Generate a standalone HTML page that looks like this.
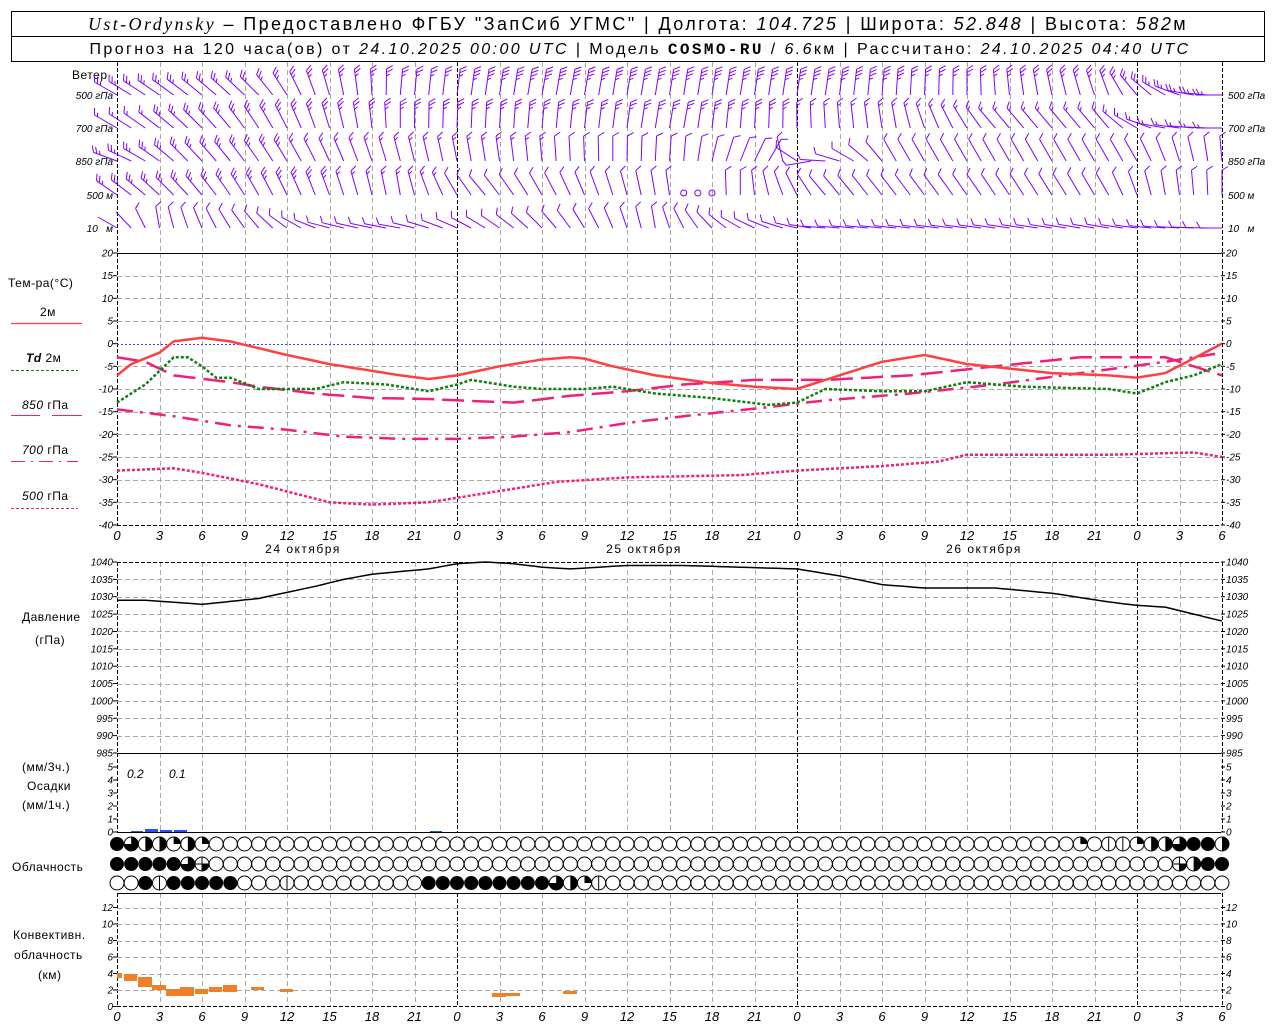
<!DOCTYPE html>
<html><head><meta charset="utf-8"><style>
html,body{margin:0;padding:0;background:#fff;}
svg{display:block;}
text{font-family:"Liberation Sans",sans-serif;}
.t{font-size:12px;fill:#000;letter-spacing:0.5px;}
.ax{font-size:10px;font-style:italic;fill:#000;}
</style></head><body>
<svg id="s" width="1280" height="1024" viewBox="0 0 1280 1024" xmlns="http://www.w3.org/2000/svg">
<rect width="1280" height="1024" fill="#fff"/>
<rect x="11.5" y="11.5" width="1253" height="50" fill="none" stroke="#000"/>
<line x1="11" y1="36.5" x2="1265" y2="36.5" stroke="#000"/>
<text x="638" y="30" text-anchor="middle" style="font-size:18px;letter-spacing:2.4px"><tspan font-style="italic" font-family="Liberation Serif">Ust-Ordynsky</tspan> – Предоставлено ФГБУ "ЗапСиб УГМС" | Долгота: <tspan font-style="italic">104.725</tspan> | Широта: <tspan font-style="italic">52.848</tspan> | Высота: <tspan font-style="italic">582</tspan>м</text>
<text x="640" y="54" text-anchor="middle" style="font-size:16px;letter-spacing:2.4px">Прогноз на 120 часа(ов) от <tspan font-style="italic">24.10.2025 00:00 UTC</tspan> | Модель <tspan font-weight="bold" font-family="Liberation Mono">COSMO-RU</tspan> / <tspan font-style="italic">6.6</tspan>км | Рассчитано: <tspan font-style="italic">24.10.2025 04:40 UTC</tspan></text>

<text class="t" x="72" y="79">Ветер</text>
<g class="ax" text-anchor="end">
<text x="113" y="99">500 гПа</text><text x="113" y="132">700 гПа</text><text x="113" y="165">850 гПа</text><text x="113" y="199">500 м</text><text x="113" y="232">10&#160;&#160;&#160;м</text>
</g>
<g class="ax">
<text x="1228" y="99">500 гПа</text><text x="1228" y="132">700 гПа</text><text x="1228" y="165">850 гПа</text><text x="1228" y="199">500 м</text><text x="1228" y="232">10&#160;&#160;&#160;м</text>
</g>

<text class="t" x="8" y="287">Тем-ра(°C)</text>
<text class="t" x="40" y="316">2м</text>
<line x1="11" y1="323.5" x2="82" y2="323.5" stroke="#ff4040" stroke-width="1.2"/>
<text class="t" x="26" y="362"><tspan font-style="italic" font-weight="bold">Td</tspan>  2м</text>
<line x1="11" y1="370.5" x2="78" y2="370.5" stroke="#108010" stroke-dasharray="3,2"/>
<text class="t" x="22" y="409"><tspan font-style="italic">850</tspan> гПа</text>
<line x1="11" y1="415.5" x2="40" y2="415.5" stroke="#f0207a"/><line x1="52" y1="415.5" x2="82" y2="415.5" stroke="#f0207a"/>
<text class="t" x="22" y="454"><tspan font-style="italic">700</tspan> гПа</text>
<line x1="11" y1="461.5" x2="78" y2="461.5" stroke="#f0207a" stroke-dasharray="14,6,2,6"/>
<text class="t" x="22" y="500"><tspan font-style="italic">500</tspan> гПа</text>
<line x1="11" y1="508.5" x2="78" y2="508.5" stroke="#f0207a" stroke-dasharray="3,2"/>

<text class="t" x="22" y="621">Давление</text>
<text class="t" x="35" y="644">(гПа)</text>
<text class="t" x="22" y="771">(мм/3ч.)</text>
<text class="t" x="27" y="790">Осадки</text>
<text class="t" x="22" y="809">(мм/1ч.)</text>
<text class="t" x="12" y="871">Облачность</text>
<text class="t" x="13" y="939">Конвективн.</text>
<text class="t" x="14" y="959">облачность</text>
<text class="t" x="38" y="979">(км)</text>
<text class="ax" x="127" y="778" style="font-size:12px">0.2</text>
<text class="ax" x="169" y="778" style="font-size:12px">0.1</text>

<g class="t" text-anchor="middle" style="letter-spacing:1.5px">
<text x="303" y="553">24 октября</text><text x="644" y="553">25 октября</text><text x="984" y="553">26 октября</text>
</g>
<g id="dyn"></g>
</svg>
<script>
(function(){
var g=document.getElementById("dyn"),out=[];
function X(h){return 117+h*340/24;}
function add(s){out.push(s);}
function ln(x1,y1,x2,y2,st){add('<line x1="'+x1.toFixed(1)+'" y1="'+y1.toFixed(1)+'" x2="'+x2.toFixed(1)+'" y2="'+y2.toFixed(1)+'" '+st+'/>');}
var grey='stroke="#a8a8a8" stroke-dasharray="5,3"',blk='stroke="#000" stroke-dasharray="4,2"';
var panels=[[62,253],[253,525],[562,753],[753,832],[893,1006]];
panels.forEach(function(p){
 for(var h=0;h<=78;h+=3){var x=Math.round(X(h))+0.5;var day=(h%24==0)||h==78;ln(x,p[0],x,p[1],day?blk:grey);}
});
function TY(t){return 253+(20-t)*272/60;}
function PY(p){return 562+(1040-p)*191/55;}
function RY(r){return 832-r*13;}
function CY(k){return 1006.5-k*8.25;}
for(var t=15;t>=-35;t-=5){if(t==0)continue;var y=Math.round(TY(t))+0.5;ln(117,y,1221,y,grey);}
ln(117,344.5,1221,344.5,'stroke="#3040ff" stroke-dasharray="2,2"');
ln(117,525.5,1221,525.5,blk);
for(var p=1035;p>985;p-=5){var y=Math.round(PY(p))+0.5;ln(117,y,1221,y,grey);}
ln(117,562.5,1221,562.5,blk);
for(var k=2;k<=12;k+=2){var y=Math.round(CY(k))+0.5;ln(117,y,1221,y,grey);}
ln(117,1006.5,1221,1006.5,blk);
[253.5,753.5,832.5,893.5].forEach(function(y){ln(117,y,1221,y,'stroke="#000" stroke-width="1"');});
function axl(v,y,lab){add('<text class="ax" x="113" y="'+(y+3.5)+'" text-anchor="end">'+lab+'</text>');add('<text class="ax" x="1226" y="'+(y+3.5)+'">'+lab+'</text>');ln(113,y,117,y,'stroke="#000"');ln(1221,y,1225,y,'stroke="#000"');}
for(var t=20;t>=-40;t-=5)axl(t,TY(t),t);
for(var p=1040;p>=985;p-=5)axl(p,PY(p),p);
for(var r=0;r<=5;r++)axl(r,RY(r),r);
for(var k=0;k<=12;k+=2)axl(k,CY(k),k);
for(var h=0;h<=78;h+=3){var lab=h%24;add('<text class="ax" x="'+X(h).toFixed(1)+'" y="540" text-anchor="middle" style="font-size:13px">'+lab+'</text>');add('<text class="ax" x="'+X(h).toFixed(1)+'" y="1021" text-anchor="middle" style="font-size:13px">'+lab+'</text>');}
function interp(kf,h){for(var i=0;i<kf.length-1;i++){if(h<=kf[i+1][0]){var a=kf[i],b=kf[i+1],f=(h-a[0])/(b[0]-a[0]);return a[1]+(b[1]-a[1])*f;}}return kf[kf.length-1][1];}
function curve(kf,fy,st){var pts=[];for(var h=0;h<=78;h+=0.5){pts.push(X(h).toFixed(1)+','+fy(interp(kf,h)).toFixed(1));}add('<polyline fill="none" points="'+pts.join(' ')+'" '+st+'/>');}
var T2=[[0,-7],[1,-4.5],[3,-2],[4,0.5],[6,1.3],[8,0.5],[10,-1],[12,-2.5],[15,-4.5],[18,-6],[20,-7],[22,-7.8],[24,-7],[27,-5],[30,-3.5],[32,-3],[33,-3.3],[35,-5],[38,-7],[42,-8.7],[45,-9.5],[48,-10],[51,-7],[54,-4],[57,-2.5],[60,-4.5],[63,-5.5],[66,-6.5],[70,-7],[72,-7.5],[74,-6.5],[78,0]];
var TD=[[0,-13],[2,-9],[4,-3],[5,-3],[6,-5],[7,-7.5],[8,-7.5],[10,-10],[14,-10],[16,-8.5],[19,-9],[22,-10.5],[24,-9],[25,-8],[28,-9.5],[30,-10],[33,-10],[35,-9.5],[38,-11],[42,-12],[46,-13.5],[48,-13],[50,-10],[54,-10.5],[57,-10.5],[60,-8.5],[64,-9.5],[70,-10],[72,-11],[74,-8.5],[76,-7],[78,-4.5]];
var T85=[[0,-3],[2,-4],[4,-7],[8,-8.5],[10,-9.5],[14,-11],[18,-12],[22,-12.2],[24,-12.5],[28,-13],[32,-11.5],[36,-10.5],[40,-9],[45,-8],[50,-8],[56,-7],[62,-5],[68,-3],[74,-3],[78,-7]];
var T70=[[0,-14.5],[4,-16],[8,-18],[12,-19],[16,-20.5],[20,-21],[24,-21],[28,-20.5],[32,-19.5],[36,-17.5],[40,-16],[46,-14],[50,-12.5],[56,-11],[62,-9],[68,-6.5],[74,-4],[78,-2]];
var T50=[[0,-28],[4,-27.5],[6,-28.5],[10,-31],[15,-35],[18,-35.5],[22,-35],[24,-34],[28,-32],[31,-30.5],[36,-29.5],[44,-29],[48,-28],[54,-27],[58,-26],[60,-24.5],[70,-24.5],[76,-24],[78,-25]];
curve(T50,TY,'stroke="#f0207a" stroke-width="2.5" stroke-dasharray="3,2"');
curve(T70,TY,'stroke="#f0207a" stroke-width="2.5" stroke-dasharray="16,7,3,7"');
curve(T85,TY,'stroke="#f0207a" stroke-width="2.5" stroke-dasharray="22,8"');
curve(TD,TY,'stroke="#108010" stroke-width="2.5" stroke-dasharray="3,2"');
curve(T2,TY,'stroke="#ff4040" stroke-width="2.5"');
var PR=[[0,1029],[2,1029],[6,1027.8],[10,1029.5],[14,1033],[16,1035],[18,1036.5],[22,1038],[24,1039.5],[26,1040],[28,1039.5],[30,1038.5],[32,1038],[36,1039],[40,1039],[44,1038.5],[48,1038],[51,1036],[54,1033.5],[57,1032.5],[62,1032.5],[66,1031],[70,1028.5],[72,1027.5],[74,1027],[76,1025],[78,1023]];
curve(PR,PY,'stroke="#000" stroke-width="1.5"');
[[131,143,1],[145,158,3],[160,172,2],[174,187,2],[430,442,1]].forEach(function(b){add('<rect x="'+b[0]+'" y="'+(832-b[2])+'" width="'+(b[1]-b[0])+'" height="'+b[2]+'" fill="#2050ff"/>');});
[[117,122,973,978],[124,137,974,981],[138,152,977,987],[152,166,985,990],[166,180,989,996],[180,194,987,996],[195,208,989,994],[209,222,987,992],[223,237,985,992],[251,264,987,990],[280,293,989,992],[492,506,993,997],[506,520,993,996],[563,577,991,994]].forEach(function(b){add('<rect x="'+b[0]+'" y="'+b[2]+'" width="'+(b[1]-b[0])+'" height="'+(b[3]-b[2])+'" fill="#f08028"/>');});
function row(def){var a=[];for(var i=0;i<=78;i++)a.push(0);for(var k in def)a[k]=def[k];return a;}
var C1=row({0:5,1:4,2:3,3:3,4:2,5:3,6:2,68:2,70:1,71:1,72:2,73:3,74:3,75:4,76:5,77:5,78:3});
var C2=row({0:5,1:5,2:5,3:5,4:5,5:4,6:6,75:6,76:3,77:5,78:5});
var C3=row({2:5,3:1,4:5,5:5,6:5,7:5,8:5,12:1,22:5,23:5,24:5,25:5,26:5,27:5,28:5,29:5,30:5,31:4,32:3,33:2,34:1});
[[C1,844],[C2,864],[C3,883]].forEach(function(rr){var cy=rr[1];rr[0].forEach(function(t,i){var cx=X(i),r=7,s='';
 if(t==5)s='<circle cx="'+cx+'" cy="'+cy+'" r="'+r+'" fill="#000"/>';
 else{s='<circle cx="'+cx+'" cy="'+cy+'" r="'+r+'" fill="#fff" stroke="#000" stroke-width="1"/>';
  if(t==2)s+='<path d="M'+cx+' '+cy+' L'+cx+' '+(cy-r)+' A'+r+' '+r+' 0 0 1 '+(cx+r)+' '+cy+' Z"/>';
  if(t==3)s+='<path d="M'+cx+' '+(cy-r)+' A'+r+' '+r+' 0 0 1 '+cx+' '+(cy+r)+' Z"/>';
  if(t==4)s+='<path d="M'+cx+' '+cy+' L'+cx+' '+(cy-r)+' A'+r+' '+r+' 0 1 1 '+(cx-r)+' '+cy+' Z"/>';
  if(t==1)s+='<line x1="'+cx+'" y1="'+(cy-r)+'" x2="'+cx+'" y2="'+(cy+r)+'" stroke="#000"/>';
  if(t==6)s+='<line x1="'+cx+'" y1="'+(cy-r)+'" x2="'+cx+'" y2="'+(cy+r)+'" stroke="#000"/><line x1="'+(cx-r)+'" y1="'+cy+'" x2="'+(cx+r)+'" y2="'+cy+'" stroke="#000"/><path d="M'+cx+' '+cy+' L'+(cx+r)+' '+cy+' A'+r+' '+r+' 0 0 1 '+cx+' '+(cy+r)+' Z"/>';
 }add(s);});});
var W=[
 {y:95,len:26,k:[[0,60,3],[10,45,3],[14,20,3],[20,-5,3],[30,-10,4],[50,-8,4],[60,0,3],[70,20,3],[72,40,3],[76,80,3],[78,90,3]]},
 {y:128,len:26,k:[[0,60,2],[8,40,3],[20,0,3],[40,-10,3],[55,10,2],[62,40,2],[70,40,2],[74,80,2],[78,90,2]]},
 {y:161,len:25,k:[[0,70,3],[5,45,3],[20,15,2],[40,-5,1],[46,-30,1],[49,100,1],[52,60,1],[55,30,1],[72,30,1],[78,5,1]]},
 {y:195,len:25,k:[[0,55,3],[10,30,3],[20,10,2],[26,40,1],[38,10,1],[44,0,1],[50,40,1],[70,30,1],[74,10,1],[78,0,1]]},
 {y:228,len:22,k:[[0,60,0],[3,10,1],[10,40,1],[15,75,1],[20,80,1],[30,45,1],[38,10,1],[44,60,1],[50,85,1],[70,80,1],[78,90,1]]}
];
var pc='stroke="#8000ff" stroke-width="1"';
W.forEach(function(w,ri){
 var ka=w.k.map(function(e){return [e[0],e[1]];}),kn=w.k.map(function(e){return [e[0],e[2]];});
 for(var h=0;h<=78;h++){
  var x=X(h),y=w.y;
  if(ri==3&&h>=40&&h<=42){add('<circle cx="'+x.toFixed(1)+'" cy="'+(y-2)+'" r="3" fill="none" '+pc+'/>');continue;}
  var a=interp(ka,h)*Math.PI/180,n=Math.round(interp(kn,h));
  var dx=-Math.sin(a),dy=-Math.cos(a),tx=x+dx*w.len,ty=y+dy*w.len;
  ln(x,y,tx,ty,pc);
  var th=60*Math.PI/180,fx=dx*Math.cos(th)-dy*Math.sin(th),fy=dx*Math.sin(th)+dy*Math.cos(th);
  for(var i=0;i<n;i++){var bx=tx-dx*i*3.5,by=ty-dy*i*3.5;var fl=(i==n-1&&n>1)?4:7;ln(bx,by,bx+fx*fl,by+fy*fl,pc);}
 }
});
g.innerHTML=out.join('');
})();
</script>
</body></html>
